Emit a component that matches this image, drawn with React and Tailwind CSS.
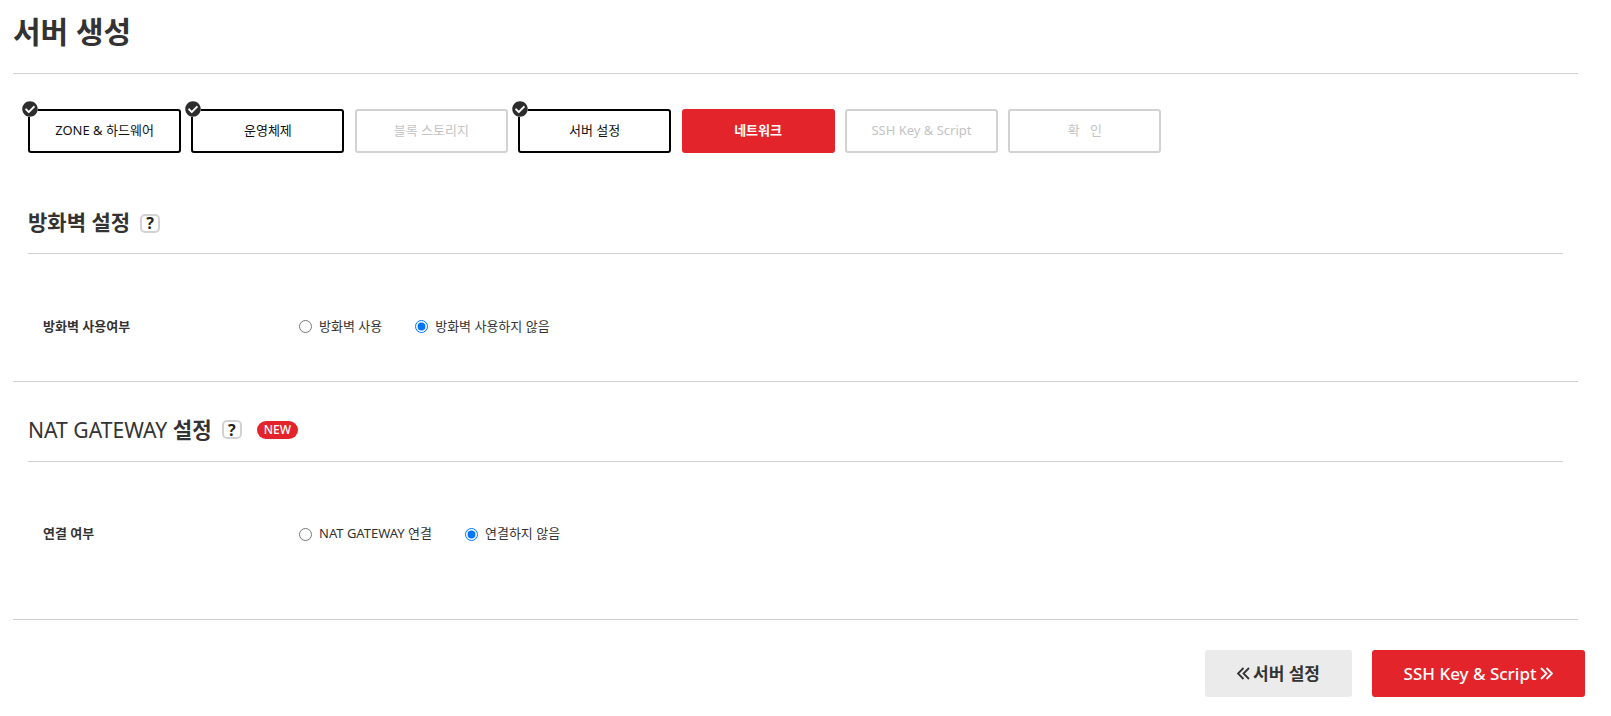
import { FaCheckCircle } from "react-icons/fa";

const steps = [
  { label: "ZONE & 하드웨어", state: "done" },
  { label: "운영체제", state: "done" },
  { label: "블록 스토리지", state: "off" },
  { label: "서버 설정", state: "done" },
  { label: "네트워크", state: "active" },
  { label: "SSH Key & Script", state: "off" },
  { label: "확   인", state: "off" },
];

function Step({ label, state }) {
  return (
    <div className="relative">
      {state === "done" && (
        <span className="absolute -top-[8px] -left-[6px] w-4 h-4 rounded-full bg-white">
          <FaCheckCircle size={16} className="text-[#2d2d2d]" />
        </span>
      )}
      {state === "done" && (
        <div className="w-[153px] h-[44px] border-2 border-black rounded-[3px] flex items-center justify-center text-[13px] text-[#111] whitespace-pre">
          {label}
        </div>
      )}
      {state === "off" && (
        <div className="w-[153px] h-[44px] border-2 border-[#d2d2d2] rounded-[3px] flex items-center justify-center text-[13px] text-[#c4c4c4] whitespace-pre">
          {label}
        </div>
      )}
      {state === "active" && (
        <div className="w-[153px] h-[44px] bg-[#e3242a] rounded-[3px] flex items-center justify-center text-[13px] font-bold text-white">
          {label}
        </div>
      )}
    </div>
  );
}

function Help() {
  return (
    <span className="w-[20px] h-[19px] border-2 border-[#d2d2d2] rounded-[5px] flex items-center justify-center text-[16px] font-bold text-[#222]">
      ?
    </span>
  );
}

function Radio({ label, checked, name }) {
  return (
    <label className="flex items-center gap-[7px] text-[13px] text-[#333]">
      <input type="radio" name={name} defaultChecked={checked} className="w-[13px] h-[13px]" />
      {label}
    </label>
  );
}

function Arrows({ left }) {
  return (
    <svg width="13" height="13" viewBox="0 0 13 13" fill="none" stroke="currentColor" strokeWidth="1.8">
      {left ? <path d="M6.5 1 1 6.5l5.5 5.5M12 1 6.5 6.5 12 12" /> : <path d="M6.5 1 12 6.5 6.5 12M1 1l5.5 5.5L1 12" />}
    </svg>
  );
}

export default function App() {
  return (
    <div
      className="w-[1611px] h-[716px] overflow-hidden bg-white text-[#333] pl-[13px] pr-[33px]"
      style={{ fontFamily: '"Noto Sans", "Noto Sans CJK KR", sans-serif' }}
    >
      {/* 제목 */}
      <h1 className="h-[74px] border-b border-[#d0d0d0] pb-[10px] flex items-center text-[30px] font-bold">서버 생성</h1>

      {/* 단계 */}
      <div className="flex gap-[10.4px] pl-[15px] mt-[35px]">
        {steps.map((s) => (
          <Step key={s.label} label={s.label} state={s.state} />
        ))}
      </div>

      {/* 방화벽 설정 */}
      <div className="border-b border-[#d0d0d0]">
        <div className="mx-[15px] h-[101px] border-b border-[#d0d0d0] flex items-center gap-[10px] pt-[40px]">
          <h2 className="text-[21px] font-semibold">방화벽 설정</h2>
          <Help />
        </div>
        <div className="flex items-center pl-[30px] h-[127px] pt-[18px]">
          <span className="w-[256px] text-[13px] font-bold">방화벽 사용여부</span>
          <div className="flex gap-[33px]">
            <Radio name="fw" label="방화벽 사용" />
            <Radio name="fw" label="방화벽 사용하지 않음" checked />
          </div>
        </div>
      </div>

      {/* NAT GATEWAY */}
      <div className="border-b border-[#d0d0d0]">
        <div className="mx-[15px] h-[80px] border-b border-[#d0d0d0] flex items-center pt-[16px]">
          <h2 className="text-[21.15px]">
            NAT GATEWAY <span className="font-semibold">설정</span>
          </h2>
          <span className="ml-[10px]">
            <Help />
          </span>
          <span className="ml-[15px] h-[18px] px-[7px] rounded-full bg-[#e3242a] text-white text-[12px] font-medium flex items-center">NEW</span>
        </div>
        <div className="flex items-center pl-[30px] h-[157px] pb-[13px]">
          <span className="w-[256px] text-[13px] font-bold">연결 여부</span>
          <div className="flex gap-[33px]">
            <Radio name="nat" label="NAT GATEWAY 연결" />
            <Radio name="nat" label="연결하지 않음" checked />
          </div>
        </div>
      </div>

      {/* 하단 버튼 */}
      <div className="flex justify-end gap-[20px] mt-[30px] -mr-[7px]">
        <button className="w-[147px] h-[47px] bg-[#ebebeb] rounded-[3px] flex items-center justify-center gap-[3px] text-[17px] font-semibold text-[#333]">
          <Arrows left />
          서버 설정
        </button>
        <button className="w-[213px] h-[47px] bg-[#e3242a] rounded-[3px] flex items-center justify-center gap-[4px] text-[17px] font-medium text-white">
          SSH Key & Script
          <Arrows />
        </button>
      </div>
    </div>
  );
}
